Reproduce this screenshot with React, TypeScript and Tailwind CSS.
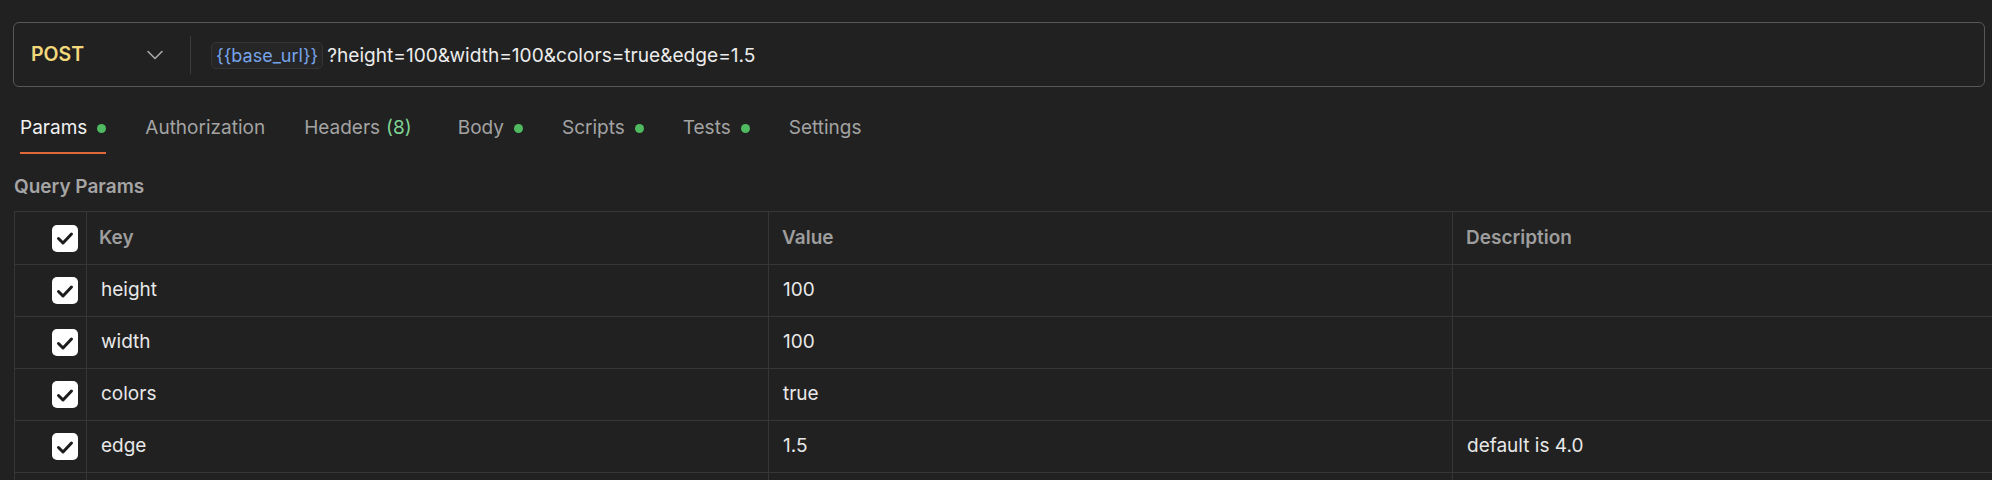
import { ChevronDown } from "lucide-react";

const tabs = [
  { label: "Params", dot: true, active: true },
  { label: "Authorization" },
  { label: "Headers", count: "(8)" },
  { label: "Body", dot: true },
  { label: "Scripts", dot: true },
  { label: "Tests", dot: true },
  { label: "Settings" },
];

const params = [
  { key: "height", value: "100", description: "" },
  { key: "width", value: "100", description: "" },
  { key: "colors", value: "true", description: "" },
  { key: "edge", value: "1.5", description: "default is 4.0" },
];

const Checkbox = () => (
  <div className="w-[26px] h-[27px] rounded-[5px] bg-white flex items-center justify-center">
    <svg width="26" height="26" viewBox="0 0 26 26" fill="none">
      <path
        d="M6.5 13.5l4.5 4.5L19.5 9"
        stroke="#1c1c1c"
        strokeWidth="3"
        strokeLinecap="round"
        strokeLinejoin="round"
      />
    </svg>
  </div>
);

const App = () => {
  return (
    <div className="w-full h-[480px] overflow-hidden bg-[#212121] font-['Inter','Liberation_Sans',sans-serif]">
      {/* URL bar */}
      <div className="ml-[13px] mr-[7px] pt-[22px]">
        <div className="h-[65px] flex items-center border border-[#575757] rounded-[6px]">
          <div className="w-[176px] flex items-center justify-between pl-[17px] pr-[21px]">
            <span className="text-[19.5px] font-semibold text-[#f3d97c]">POST</span>
            <ChevronDown className="w-[28px] h-[28px] text-[#a9a9a9]" strokeWidth={1.4} />
          </div>
          <div className="w-px h-[38px] bg-[#3b3b3b]" />
          <div className="ml-[20px] mt-[2px] h-[27px] flex items-center px-[4px] rounded-[5px] bg-[#262626] border border-[#343434]">
            <span className="text-[18px] text-[#76a4ea] leading-none">{"{{base_url}}"}</span>
          </div>
          <span className="ml-[4px] mt-[2px] text-[19.1px] text-[#ececec]">
            ?height=100&amp;width=100&amp;colors=true&amp;edge=1.5
          </span>
        </div>
      </div>

      {/* Tabs */}
      <div className="mt-[13px] pl-[20px] flex gap-[39px]">
        {tabs.map((t) => (
          <div
            key={t.label}
            className={`h-[54px] pt-[5px] flex items-center border-b-2 text-[19px] ${
              t.active ? "border-[#e0683b] text-[#f2f2f2]" : "border-transparent text-[#a3a3a3]"
            } ${t.count ? "mr-[7px]" : ""}`}
          >
            <span>{t.label}</span>
            {t.count && <span className="ml-[6px] text-[#7fd394]">{t.count}</span>}
            {t.dot && <span className="ml-[10px] w-[9px] h-[9px] rounded-full bg-[#4fba5f]" />}
          </div>
        ))}
      </div>

      {/* Query Params */}
      <div className="mt-[21px] pl-[14px] h-[24px] flex items-center text-[19px] font-semibold text-[#a5a5a5]">
        Query Params
      </div>

      {/* Table */}
      <div className="mt-[12px] ml-[14px] border-t border-l border-[#363636]">
        <div className="flex h-[53px] border-b border-[#363636] text-[19px] font-semibold text-[#9d9d9d]">
          <div className="w-[72px] shrink-0 pl-[37px] flex items-center border-r border-[#363636]">
            <Checkbox />
          </div>
          <div className="w-[682px] shrink-0 pl-[12px] flex items-center border-r border-[#363636]">Key</div>
          <div className="w-[684px] shrink-0 pl-[13px] flex items-center border-r border-[#363636]">Value</div>
          <div className="flex-1 pl-[13px] flex items-center">Description</div>
        </div>
        {params.map((p) => (
          <div key={p.key} className="flex h-[52px] border-b border-[#363636] text-[19px] text-[#e8e8e8]">
            <div className="w-[72px] shrink-0 pl-[37px] flex items-center border-r border-[#363636]">
              <Checkbox />
            </div>
            <div className="w-[682px] shrink-0 pl-[14px] flex items-center border-r border-[#363636]">{p.key}</div>
            <div className="w-[684px] shrink-0 pl-[14px] flex items-center border-r border-[#363636]">{p.value}</div>
            <div className="flex-1 pl-[14px] flex items-center">{p.description}</div>
          </div>
        ))}
        <div className="flex h-[52px]">
          <div className="w-[72px] shrink-0 border-r border-[#363636]" />
          <div className="w-[682px] shrink-0 border-r border-[#363636]" />
          <div className="w-[684px] shrink-0 border-r border-[#363636]" />
          <div className="flex-1" />
        </div>
      </div>
    </div>
  );
};

export default App;
